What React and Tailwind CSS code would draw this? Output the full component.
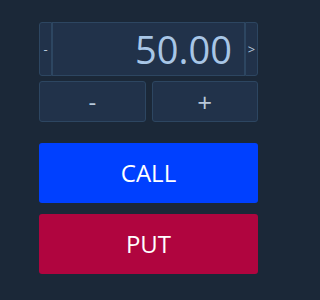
export default function App() {
  return (
    <div className="w-full min-h-screen bg-[#1b2838] pt-[22px] pl-[39px] font-['Open_Sans',sans-serif]">
      <div className="w-[219px] flex flex-col">
        <div className="flex h-[54px]">
          <button className="w-[13px] h-full bg-[#21324a] border border-[#2d4661] rounded-l-[3px] text-[13px] text-[#b8c8da] leading-none">-</button>
          <div className="flex-1 h-full bg-[#21324a] border border-[#2d4661] flex items-center justify-end pr-[12px] text-[38px] text-[#a8c6e6] leading-none">50.00</div>
          <button className="w-[13px] h-full bg-[#21324a] border border-[#2d4661] rounded-r-[3px] text-[13px] text-[#b8c8da] leading-none">&gt;</button>
        </div>
        <div className="flex gap-[6px] mt-[5px] h-[41px]">
          <button className="flex-1 bg-[#21324a] border border-[#2d4661] rounded-[3px] text-[24px] text-[#b8c8da] leading-none">-</button>
          <button className="flex-1 bg-[#21324a] border border-[#2d4661] rounded-[3px] text-[26px] text-[#b8c8da] leading-none">+</button>
        </div>
        <button className="mt-[21px] h-[60px] bg-[#0040ff] rounded-[3px] text-[24px] text-white">CALL</button>
        <button className="mt-[11px] h-[60px] bg-[#b0053f] rounded-[3px] text-[24px] text-white">PUT</button>
      </div>
    </div>
  );
}
